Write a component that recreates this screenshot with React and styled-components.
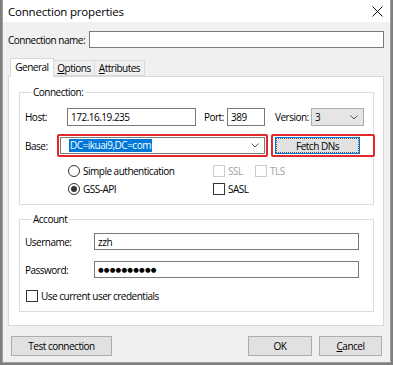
import React from 'react';
import styled, { createGlobalStyle } from 'styled-components';

const Global = createGlobalStyle`
  html, body { margin: 0; padding: 0; }
  body {
    background: #7f7f7f;
    width: 393px;
    height: 365px;
    overflow: hidden;
    font-family: "Open Sans", "Noto Sans", "Liberation Sans", sans-serif;
    font-size: 10px;
    letter-spacing: -0.5px;
    color: #000;
  }
  * { box-sizing: border-box; }
`;

const Window = styled.div`
  margin-left: 2px;
  width: 389px;
  height: 363px;
  background: #f0f0f0;
  border: 1px solid #a0a0a0;
  border-top: none;
  display: flex;
  flex-direction: column;
`;

const TitleBar = styled.div`
  height: 22px;
  background: #fff;
  display: flex;
  align-items: center;
  justify-content: space-between;
  padding: 0 7px 0 5px;
  font-size: 11.5px;
  letter-spacing: -0.2px;
`;

const Content = styled.div`
  padding: 0 6px 0 5px;
  display: flex;
  flex-direction: column;
`;

const Row = styled.div`
  display: flex;
  align-items: center;
  margin-top: ${p => p.$mt || 0}px;
  margin-left: ${p => p.$ml || 0}px;
`;

const Label = styled.span`
  width: ${p => p.$w}px;
  flex: none;
  margin-left: ${p => p.$ml || 0}px;
  white-space: nowrap;
  color: ${p => (p.$disabled ? '#a2a2a2' : '#000')};
`;

const TextBox = styled.div`
  width: ${p => (p.$w ? `${p.$w}px` : 'auto')};
  flex: ${p => (p.$w ? 'none' : '1')};
  height: ${p => p.$h || 17}px;
  background: #fff;
  border: 1px solid #7a7a7a;
  display: flex;
  align-items: center;
  padding-left: 3px;
  white-space: nowrap;
`;

const Dots = styled.span`
  font-size: 6.5px;
  letter-spacing: 0.2px;
  font-family: "DejaVu Sans", sans-serif;
`;

const TabStrip = styled.div`
  display: flex;
  align-items: flex-end;
  height: 18px;
  margin-top: 10px;
  padding-left: 2px;
  position: relative;
  z-index: 1;
`;

const Tab = styled.div`
  height: ${p => (p.$active ? 19 : 16)}px;
  width: ${p => p.$w}px;
  background: ${p => (p.$active ? '#fff' : '#f0f0f0')};
  border: 1px solid #d9d9d9;
  border-bottom: ${p => (p.$active ? 'none' : '1px solid #d9d9d9')};
  margin-left: ${p => (p.$active ? 0 : -1)}px;
  margin-bottom: ${p => (p.$active ? -1 : 0)}px;
  display: flex;
  align-items: center;
  justify-content: center;
  padding-bottom: ${p => (p.$active ? 2 : 0)}px;
`;

const U = styled.span`
  text-decoration: underline;
  text-underline-offset: 1px;
`;

const Panel = styled.div`
  height: 250px;
  background: #fff;
  border: 1px solid #d9d9d9;
  padding: 8px 9px 0 10px;
  display: flex;
  flex-direction: column;
`;

const Group = styled.fieldset`
  margin: ${p => p.$mt || 0}px 0 0 0;
  border: 1px solid #dcdcdc;
  padding: ${p => p.$pt || 0}px 0 ${p => p.$pb || 0}px 5px;
  min-width: 0;
`;

const Legend = styled.legend`
  padding: 0 2px;
  margin-left: 6px;
  line-height: 14px;
`;

const Combo = styled.div`
  width: ${p => p.$w}px;
  height: ${p => p.$h || 17}px;
  background: ${p => (p.$gray ? '#e5e5e5' : '#fff')};
  border: 1px solid ${p => (p.$gray ? '#adadad' : '#7a7a7a')};
  display: flex;
  align-items: center;
  justify-content: space-between;
  padding: 0 5px 0 ${p => p.$pl || 3}px;
  flex: none;
`;

const Selected = styled.span`
  background: #0078d7;
  color: #fff;
  padding: 0 1px;
  line-height: 13px;
`;

const Annot = styled.div`
  border: 2px solid #e3262a;
  border-radius: 2px;
  padding: ${p => p.$pad};
  margin-left: ${p => p.$ml || 0}px;
  display: flex;
  flex: none;
`;

const FetchButton = styled.div`
  width: 85px;
  height: 17px;
  background: #e1e1e1;
  border: 1px solid #0078d7;
  display: flex;
  align-items: center;
  justify-content: center;
  outline: 1px dotted #555;
  outline-offset: -2px;
`;

const OptionGrid = styled.div`
  display: grid;
  grid-template-columns: 145px 42px auto;
  grid-auto-rows: 18px;
  align-items: center;
  margin: 5px 0 0 43px;
`;

const Opt = styled.div`
  display: flex;
  align-items: center;
  gap: 3px;
  white-space: nowrap;
  color: ${p => (p.$disabled ? '#a2a2a2' : '#000')};
`;

const Radio = styled.span`
  width: 12px;
  height: 12px;
  border-radius: 50%;
  border: 1px solid #333;
  background: #fff;
  display: flex;
  align-items: center;
  justify-content: center;
  flex: none;
  &::after {
    content: '';
    width: 6px;
    height: 6px;
    border-radius: 50%;
    background: ${p => (p.$checked ? '#333' : 'transparent')};
  }
`;

const Check = styled.span`
  width: 12px;
  height: 12px;
  border: 1px solid ${p => (p.$disabled ? '#cccccc' : '#333')};
  background: #fff;
  flex: none;
`;

const ButtonBar = styled.div`
  display: flex;
  align-items: center;
  margin-top: 10px;
  padding: 0 8px 0 8px;
  gap: 7px;
`;

const Button = styled.div`
  width: ${p => p.$w}px;
  height: 20px;
  background: #e1e1e1;
  border: 1px solid #adadad;
  display: flex;
  align-items: center;
  justify-content: center;
  margin-left: ${p => (p.$push ? 'auto' : '0')};
`;

const Chevron = ({ color = '#555' }) => (
  <svg width="8" height="5" viewBox="0 0 8 5">
    <path d="M0.5 0.5 L4 4 L7.5 0.5" fill="none" stroke={color} strokeWidth="1" />
  </svg>
);

const CloseIcon = () => (
  <svg width="11" height="11" viewBox="0 0 11 11">
    <path d="M0.5 0.5 L10.5 10.5 M10.5 0.5 L0.5 10.5" stroke="#111" strokeWidth="1" />
  </svg>
);

export default function App() {
  return (
    <>
      <Global />
      <Window>
        <TitleBar>
          <span>Connection properties</span>
          <CloseIcon />
        </TitleBar>
        <Content>
          <Row $mt={9}>
            <Label $w={81}>Connection name:</Label>
            <TextBox />
          </Row>

          <TabStrip>
            <Tab $active $w={44}>General</Tab>
            <Tab $w={42}><U>O</U>ptions</Tab>
            <Tab $w={51}><U>A</U>ttributes</Tab>
          </TabStrip>

          <Panel>
            <Group $pt={9} $pb={6}>
              <Legend>Connection:</Legend>
              <Row>
                <Label $w={42}>Host:</Label>
                <TextBox $w={129} $h={18}>172.16.19.235</TextBox>
                <Label $w={23} $ml={8}>Port:</Label>
                <TextBox $w={38} $h={18}>389</TextBox>
                <Label $w={36} $ml={10}>Version:</Label>
                <Combo $w={53} $h={18} $gray>
                  <span>3</span>
                  <Chevron />
                </Combo>
              </Row>
              <Row $mt={8}>
                <Label $w={32}>Base:</Label>
                <Annot $pad="1px">
                  <Combo $w={205} $pl={8}>
                    <Selected>DC=ikuai9,DC=com</Selected>
                    <Chevron />
                  </Combo>
                </Annot>
                <Annot $pad="1px 13px 1px 2px" $ml={3}>
                  <FetchButton>Fetch DNs</FetchButton>
                </Annot>
              </Row>
              <OptionGrid>
                <Opt><Radio />Simple authentication</Opt>
                <Opt $disabled><Check $disabled />SSL</Opt>
                <Opt $disabled><Check $disabled />TLS</Opt>
                <Opt><Radio $checked />GSS-API</Opt>
                <Opt><Check />SASL</Opt>
              </OptionGrid>
            </Group>

            <Group $mt={7} $pt={7} $pb={8}>
              <Legend>Account</Legend>
              <Row>
                <Label $w={69}>Username:</Label>
                <TextBox $w={265}>zzh</TextBox>
              </Row>
              <Row $mt={11}>
                <Label $w={69}>Password:</Label>
                <TextBox $w={265}><Dots>●●●●●●●●●●</Dots></TextBox>
              </Row>
              <Row $mt={11} $ml={1}>
                <Opt><Check />Use current user credentials</Opt>
              </Row>
            </Group>
          </Panel>
        </Content>

        <ButtonBar>
          <Button $w={101}>Test connection</Button>
          <Button $w={64} $push>OK</Button>
          <Button $w={63}><U>C</U>ancel</Button>
        </ButtonBar>
      </Window>
    </>
  );
}
